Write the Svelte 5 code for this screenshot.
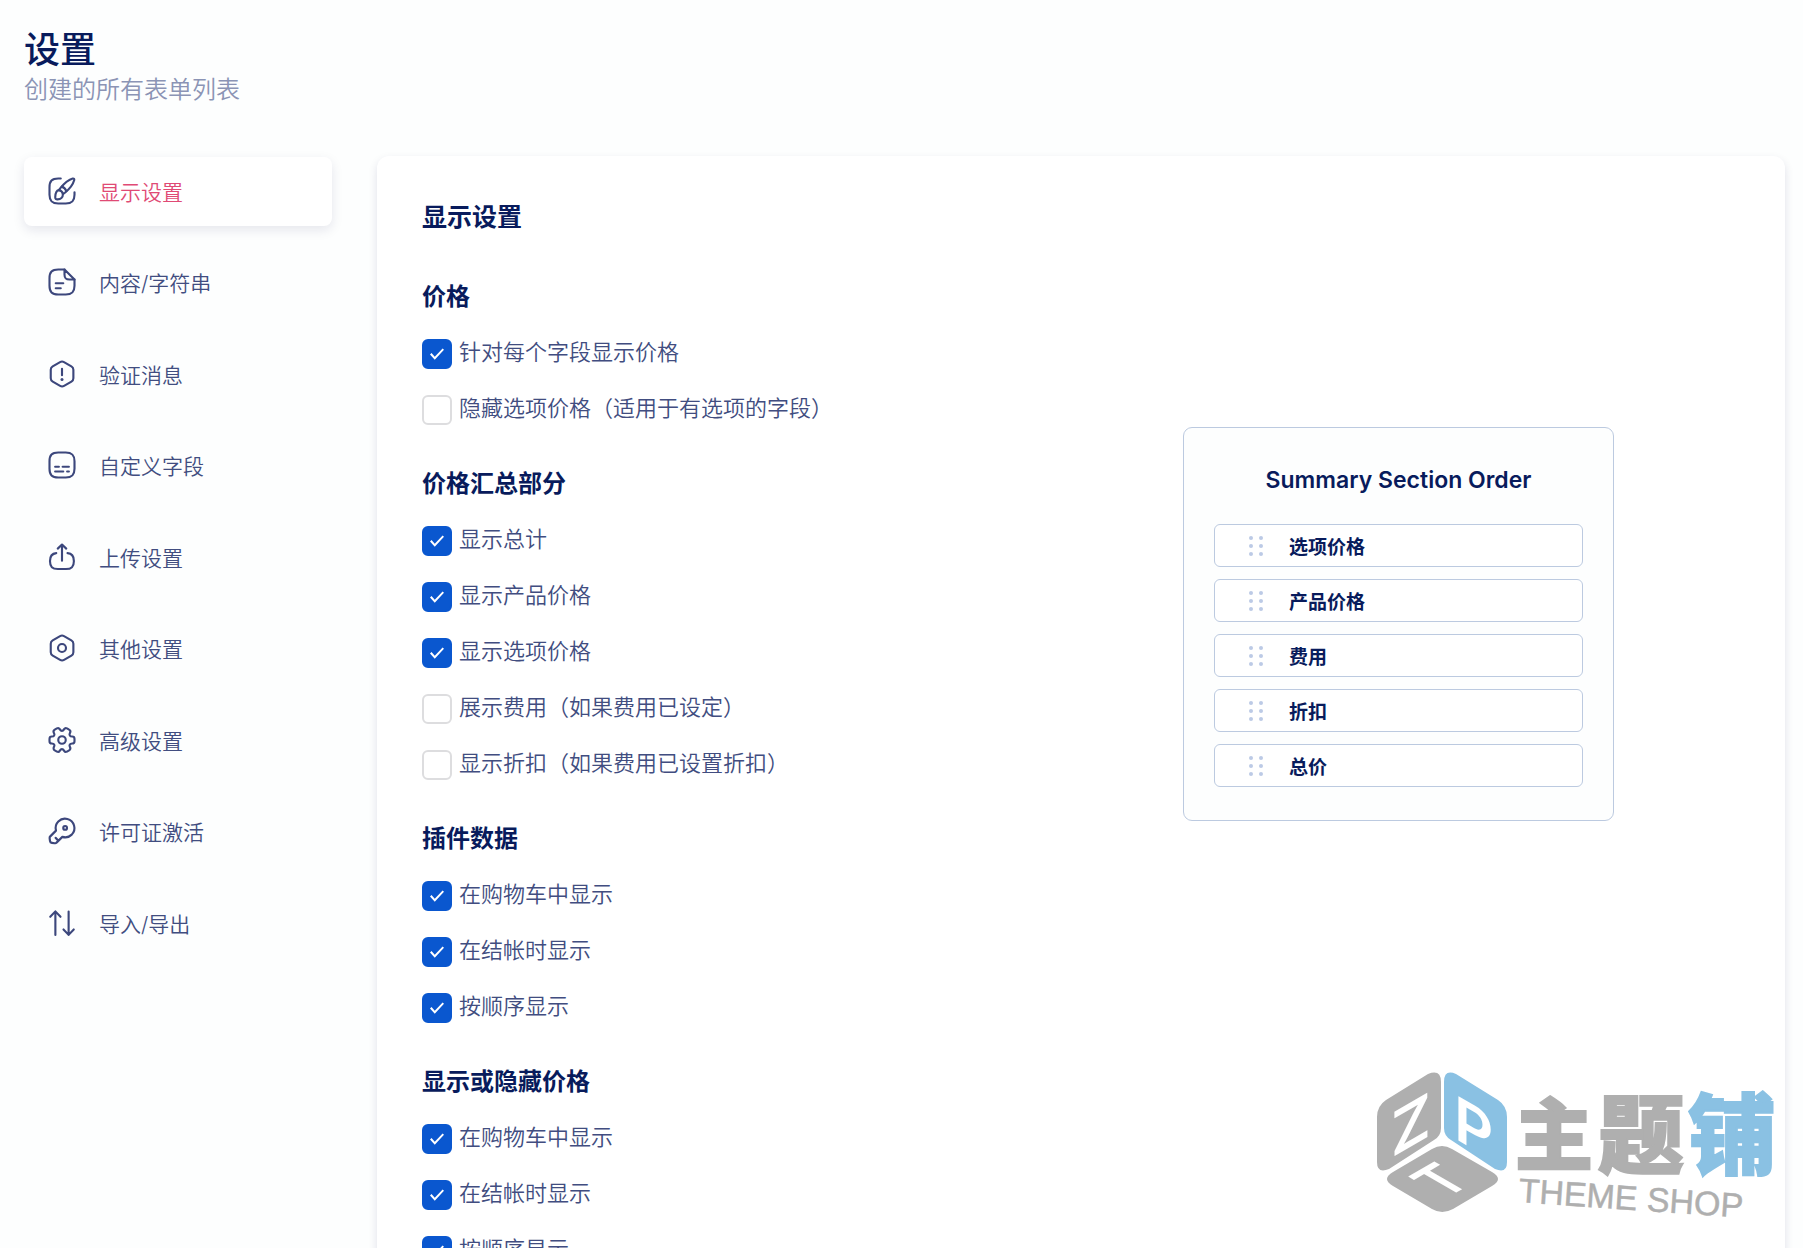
<script lang="ts">
  type Option = { id: string; label: string; checked: boolean };
  type Section = { title: string; options: Option[] };

  const menu = [
    { icon: "brush", label: "显示设置" },
    { icon: "note", label: "内容/字符串" },
    { icon: "alert", label: "验证消息" },
    { icon: "subtitle", label: "自定义字段" },
    { icon: "upload", label: "上传设置" },
    { icon: "nut", label: "其他设置" },
    { icon: "gear", label: "高级设置" },
    { icon: "key", label: "许可证激活" },
    { icon: "arrows", label: "导入/导出" },
  ];

  let active = $state("brush");

  let sections: Section[] = $state([
    {
      title: "价格",
      options: [
        { id: "field-price", label: "针对每个字段显示价格", checked: true },
        { id: "hide-option-price", label: "隐藏选项价格（适用于有选项的字段）", checked: false },
      ],
    },
    {
      title: "价格汇总部分",
      options: [
        { id: "total", label: "显示总计", checked: true },
        { id: "product-price", label: "显示产品价格", checked: true },
        { id: "option-price", label: "显示选项价格", checked: true },
        { id: "fee", label: "展示费用（如果费用已设定）", checked: false },
        { id: "discount", label: "显示折扣（如果费用已设置折扣）", checked: false },
      ],
    },
    {
      title: "插件数据",
      options: [
        { id: "data-cart", label: "在购物车中显示", checked: true },
        { id: "data-checkout", label: "在结帐时显示", checked: true },
        { id: "data-order", label: "按顺序显示", checked: true },
      ],
    },
    {
      title: "显示或隐藏价格",
      options: [
        { id: "price-cart", label: "在购物车中显示", checked: true },
        { id: "price-checkout", label: "在结帐时显示", checked: true },
        { id: "price-order", label: "按顺序显示", checked: true },
      ],
    },
  ]);

  const summary = ["选项价格", "产品价格", "费用", "折扣", "总价"];
</script>

{#snippet icon(name: string)}
  <svg class="icon" viewBox="0 0 24 24" aria-hidden="true">
    {#if name === "brush"}
      <path d="M11 2H9C4 2 2 4 2 9v6c0 5 2 7 7 7h6c5 0 7-2 7-7v-2" />
      <path d="M21.8 3.2c-.9 3.3-4.3 7.6-7.5 10.2l-1.6 1.2c-.2-1.7-1.500-3-3.300-3.300l1.300-1.600C13.300 6.500 17.300 2.900 20.600 2c.8-.2 1.400.4 1.200 1.200z" />
      <path d="M12.700 14.600c.1 2.500-1.800 4-4.200 4.100-1.300.1-2-.5-1.900-1.800.1-3.200.6-5.200 2.800-5.600M11.800 8.500c1.800.6 3.100 1.900 3.700 3.700" />
    {:else if name === "note"}
      <path d="M22 10v5c0 5-2 7-7 7H9c-5 0-7-2-7-7V9c0-5 2-7 7-7h5" />
      <path d="M22 10h-4c-3 0-4-1-4-4V2l8 8zM7 13h6M7 17h4" />
    {:else if name === "alert"}
      <path d="M12 7.750v5.250M21.100 8.600v6.800c0 1.100-.6 2.150-1.550 2.720l-5.900 3.400a3.200 3.200 0 0 1-3.150 0l-5.900-3.400A3.150 3.150 0 0 1 3 15.400V8.600c0-1.100.6-2.150 1.550-2.720l5.900-3.400a3.200 3.200 0 0 1 3.150 0l5.900 3.400a3.150 3.150 0 0 1 1.600 2.720z" />
      <circle class="dot" cx="12" cy="16.300" r="1.200" />
    {:else if name === "subtitle"}
      <path d="M15 22H9c-5 0-7-2-7-7V9c0-5 2-7 7-7h6c5 0 7 2 7 7v6c0 5-2 7-7 7z" />
      <path d="M17.500 17.200h-1.400M13 17.200H6.500M17.500 13.400h-5M9.500 13.400H6.500" />
    {:else if name === "upload"}
      <path d="M16.400 8.900c3.600.3 5.100 2.200 5.100 6.200v.2c0 4.500-1.800 6.300-6.300 6.300H8.700c-4.500 0-6.300-1.800-6.300-6.300v-.2c0-4 1.500-5.800 5-6.200" />
      <path d="M12 15V3.200M15.400 5.300L12 2 8.600 5.300" />
    {:else if name === "nut"}
      <path d="M21.100 8.600v6.800c0 1.100-.6 2.150-1.550 2.720l-5.900 3.400a3.200 3.200 0 0 1-3.150 0l-5.900-3.400A3.150 3.150 0 0 1 3 15.400V8.600c0-1.100.6-2.150 1.550-2.720l5.900-3.400a3.200 3.200 0 0 1 3.150 0l5.900 3.400a3.150 3.150 0 0 1 1.600 2.720z" />
      <circle cx="12" cy="12" r="3.200" />
    {:else if name === "gear"}
      <circle cx="12" cy="12" r="3" />
      <path d="M2 12.900v-1.800c0-1 .9-1.900 1.900-1.900 1.800 0 2.600-1.300 1.600-2.900-.5-.9-.2-2 .7-2.600l1.700-1c.8-.4 1.800-.2 2.300.6l.1.200c.9 1.600 2.400 1.600 3.300 0l.1-.2c.5-.8 1.500-1 2.300-.6l1.700 1c.9.5 1.200 1.700.7 2.600-.9 1.600-.1 2.900 1.700 2.900 1 0 1.900.9 1.900 1.900v1.800c0 1-.9 1.900-1.900 1.900-1.800 0-2.600 1.300-1.700 2.900.5.900.2 2-.7 2.600l-1.700 1c-.8.4-1.800.2-2.300-.6l-.1-.2c-.9-1.600-2.400-1.600-3.300 0l-.1.200c-.5.800-1.500 1-2.300.6l-1.700-1c-.9-.5-1.200-1.700-.7-2.600 1-1.600.2-2.900-1.600-2.900-1 0-1.900-.9-1.900-1.900z" />
    {:else if name === "key"}
      <path d="M19.800 14.900a7.500 7.500 0 0 1-7.500 1.800l-4.700 4.600c-.3.400-1 .6-1.500.5l-2.200-.3c-.7-.1-1.400-.8-1.500-1.500l-.3-2.200c-.1-.5.200-1.200.5-1.500l4.600-4.600a7.500 7.500 0 1 1 12.600 3.200zM6.900 17.500l2.300 2.300" />
      <circle cx="14.500" cy="9.500" r="1.500" />
    {:else}
      <path d="M6.700 21.500V2.800M2.600 7l4.100-4.300L10.800 7M17.300 2.800v18.700M21.400 17.200l-4.100 4.300-4.100-4.300" />
    {/if}
  </svg>
{/snippet}

<div class="page">
  <header class="header">
    <h1>设置</h1>
    <p>创建的所有表单列表</p>
  </header>

  <div class="layout">
    <nav class="menu">
      {#each menu as item}
        <button
          class="menu-item"
          class:active={active === item.icon}
          onclick={() => (active = item.icon)}
        >
          {@render icon(item.icon)}
          {item.label}
        </button>
      {/each}
    </nav>

    <main class="panel">
      <h2>显示设置</h2>
      <div class="columns">
        <div class="sections">
          {#each sections as section}
            <section>
              <h3>{section.title}</h3>
              <div class="options">
                {#each section.options as option}
                  <label class="option" for={option.id}>
                    <input type="checkbox" id={option.id} bind:checked={option.checked} />
                    <span>{option.label}</span>
                  </label>
                {/each}
              </div>
            </section>
          {/each}
        </div>

        <aside class="summary">
          <h3>Summary Section Order</h3>
          <ul>
            {#each summary as name}
              <li>
                <svg class="handle" viewBox="0 0 14 20" aria-hidden="true">
                  {#each [2, 10, 18] as y}
                    <circle cx="2" cy={y} r="2" />
                    <circle cx="12" cy={y} r="2" />
                  {/each}
                </svg>
                {name}
              </li>
            {/each}
          </ul>
        </aside>
      </div>
    </main>
  </div>

  <svg class="watermark" viewBox="0 0 410 155" aria-hidden="true">
    <g class="grey">
      <path d="M53 4Q66-1 66 12v46q0 8-7 12L14 99Q2 104 2 92V47q0-11 9-17z" />
      <path d="M57 79q10-6 20 0l40 23q12 7 0 14l-39 23q-11 6-21 0L18 116q-12-7 0-14z" />
    </g>
    <path class="blue" d="M81 4Q69-1 69 12v46q0 8 7 12l44 29q12 5 12-7V47q0-11-9-17z" />
    <g class="face">
      <text transform="translate(16 88) skewY(-30)">Z</text>
      <text transform="translate(79 68) skewY(30)">P</text>
      <text class="base" transform="translate(84 121) rotate(-30) skewX(30)">T</text>
    </g>
    <g class="name">
      <text class="grey" x="140" y="94" font-size="78">主</text>
      <text class="grey" x="223" y="97" font-size="86">题</text>
      <text class="blue" x="313" y="97" font-size="88">铺</text>
    </g>
    <text class="grey latin" transform="translate(143 132) rotate(4)">THEME SHOP</text>
  </svg>
</div>

<style>
  :global(body) {
    margin: 0;
    background: #fdfefe;
  }

  .page {
    --navy: #081b5c;
    --slate: #414d80;
    --line: #bccae0;
    --blue: #0a57cf;

    position: relative;
    box-sizing: border-box;
    height: 100vh;
    padding: 28px 18px 0 24px;
    overflow: hidden;
    color: var(--slate);
    font-family: Inter, "Noto Sans CJK SC", sans-serif;
    font-weight: 350;
  }

  h1,
  h2,
  h3,
  p,
  ul {
    margin: 0;
    padding: 0;
  }

  h1,
  h2,
  h3 {
    color: var(--navy);
  }

  .header h1 {
    font-size: 36px;
    font-weight: 500;
    line-height: 44px;
  }

  .header p {
    color: #8b94b5;
    font-size: 24px;
    line-height: 36px;
  }

  .layout {
    display: grid;
    grid-template-columns: 308px 1fr;
    gap: 45px;
    align-items: start;
    margin-top: 48px;
  }

  .menu {
    display: flex;
    flex-direction: column;
    justify-content: space-between;
    min-height: 801px;
    padding-top: 1px;
  }

  .menu-item {
    display: flex;
    align-items: center;
    gap: 22px;
    height: 69px;
    padding: 0 23px 2px;
    border: 0;
    border-radius: 8px;
    background: none;
    color: inherit;
    font: inherit;
    font-size: 21px;
    cursor: pointer;
  }

  .menu-item.active {
    background: #fff;
    box-shadow: 0 4px 12px rgba(20, 20, 80, 0.1);
    color: #e04a75;
  }

  .icon {
    width: 30px;
    height: 30px;
    fill: none;
    stroke: #3c477c;
    stroke-width: 1.7;
    stroke-linecap: round;
    stroke-linejoin: round;
  }

  .icon .dot {
    fill: #3c477c;
    stroke: none;
  }

  .panel {
    min-height: 1100px;
    padding: 43px 61px 45px 45px;
    border-radius: 12px;
    background: #fff;
    box-shadow: 0 4px 10px rgba(20, 20, 80, 0.12);
  }

  .panel h2 {
    font-size: 25px;
    font-weight: 600;
    line-height: 36px;
  }

  .columns {
    display: grid;
    grid-template-columns: 1fr 1fr;
    align-items: start;
    margin-top: 47px;
  }

  .sections {
    display: flex;
    flex-direction: column;
    gap: 44px;
  }

  .sections h3 {
    margin-bottom: 27px;
    font-size: 24px;
    font-weight: 600;
    line-height: 30px;
  }

  .options {
    display: flex;
    flex-direction: column;
    gap: 26px;
  }

  .option {
    display: flex;
    gap: 7px;
    height: 30px;
    font-size: 22px;
    line-height: 26px;
    cursor: pointer;
  }

  .option input {
    display: grid;
    place-content: center;
    box-sizing: border-box;
    flex: none;
    width: 30px;
    height: 30px;
    margin: 0;
    border: 2px solid #dddddf;
    border-radius: 6px;
    background: #fff;
    appearance: none;
    cursor: pointer;
  }

  .option input:checked {
    border-color: var(--blue);
    background: var(--blue);
  }

  .option input:checked::after {
    content: "";
    width: 14px;
    height: 12px;
    background: #fff;
    clip-path: polygon(0 54%, 11% 42%, 34% 72%, 90% 4%, 100% 14%, 34% 98%);
  }

  .summary {
    box-sizing: border-box;
    justify-self: center;
    width: 431px;
    margin-top: 145px;
    padding: 35px 30px 33px;
    border: 1px solid var(--line);
    border-radius: 9px;
    background: #fdfefe;
  }

  .summary h3 {
    margin-bottom: 27px;
    font-size: 23px;
    font-weight: 600;
    line-height: 34px;
    text-align: center;
  }

  .summary ul {
    display: flex;
    flex-direction: column;
    gap: 12px;
    list-style: none;
  }

  .summary li {
    display: flex;
    align-items: center;
    gap: 26px;
    box-sizing: border-box;
    height: 43px;
    padding-left: 34px;
    border: 1px solid var(--line);
    border-radius: 6px;
    background: #fff;
    color: var(--navy);
    font-size: 19px;
    font-weight: 600;
    cursor: grab;
  }

  .handle {
    width: 14px;
    height: 20px;
    fill: #bccae6;
  }

  .watermark {
    position: absolute;
    right: 18px;
    bottom: 23px;
    width: 410px;
    height: 155px;
    overflow: visible;
    pointer-events: none;
  }

  .watermark .grey {
    fill: #afafaf;
    stroke: #afafaf;
  }

  .watermark .blue {
    fill: #8ac1e3;
    stroke: #8ac1e3;
  }

  .watermark path {
    stroke-width: 0;
  }

  .watermark .face {
    fill: #fff;
    font-family: Inter, sans-serif;
    font-size: 61px;
    font-weight: 600;
  }

  .watermark .base {
    font-size: 52px;
    text-anchor: middle;
  }

  .watermark .name {
    font-family: "Noto Sans CJK SC", sans-serif;
    font-weight: 900;
    stroke-width: 2;
  }

  .watermark .latin {
    font-family: "Liberation Sans", sans-serif;
    font-size: 34px;
    font-weight: 400;
    stroke-width: 0.5;
  }
</style>
